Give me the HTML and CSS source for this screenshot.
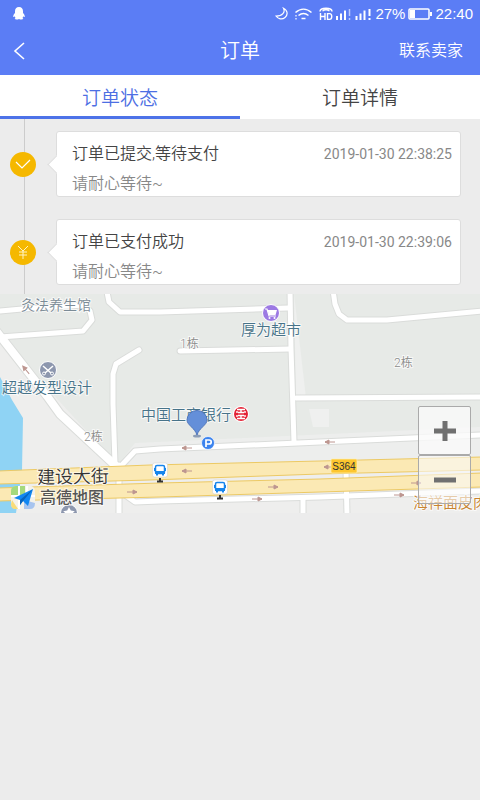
FILE: index.html
```html
<!DOCTYPE html>
<html lang="zh-CN">
<head>
  <meta charset="UTF-8" />
  <meta name="viewport" content="width=device-width, initial-scale=1.0" />
  <title>订单</title>
  <link rel="stylesheet" href="styles.css">
</head>
<body>

<header class="top">
  <div class="status-bar">
    <svg class="qq" width="12" height="13" viewBox="0 0 12 13"><path fill="#fff" d="M6 0C3.300 0 2 1.800 2 4.200V6C1 7 0 8.500 .2 10c.5.2 1-.3 1.400-.8.2.8.6 1.300 1 1.700-.6.3-1 .7-.8 1.200C2.500 12.800 5 12.600 6 12c1 .6 3.500.8 4.200.1.200-.5-.2-.9-.8-1.200.4-.4.8-.9 1-1.700.4.500.9 1 1.400.8C12 8.500 11 7 10 6V4.200C10 1.800 8.700 0 6 0z"/></svg>
    <div class="status-right">
      <svg width="97" height="14" viewBox="0 0 97 14" fill="none" stroke="#fff" stroke-width="1.500">
        <path d="M8.500 1.200c2 4-1 7.800-7.500 7.800 2 3 6 4 9 1.500s3-7-1.500-9.300z" stroke-width="1.200"/>
        <path d="M20.500 5.500c5-4.500 11-4.500 16 0M23.500 8.500c3-2.500 7-2.500 10 0M26.500 11.500h4"/>
        <path d="M21 8v1.500M21 11v1.500" stroke-width="1.200"/>
        <path d="M45 4.500C45 0 57 0 57 4.500M48 4.200c0-2 6-2 6 0" />
        <path d="M45.500 6v7M50 6v7M45.500 9.500H50M52.500 6.600v5.800h2c3 0 3-5.800 0-5.800z" stroke-width="1.400"/>
        <path d="M62 13V9M66 13V6.500M70 13V3.500M81.500 13V9M85.500 13V6.500M89.500 13V3.500" stroke-width="2"/>
        <path d="M74.500 2v7M74.500 11v2" stroke-opacity=".6"/>
        <path d="M94.500 2v7M94.500 11v2" stroke-width="2"/>
      </svg>
      <span>27%</span>
      <svg width="24" height="12" viewBox="0 0 24 12"><rect x="1" y="1" width="20" height="10" rx="1" fill="none" stroke="#fff" stroke-width="1.500"/><path fill="#fff" d="M2 2h5v8H2zM22 4h2v4h-2z"/></svg>
      <span>22:40</span>
    </div>
  </div>
  <div class="nav">
    <button class="back" aria-label="返回"><svg width="12" height="18" viewBox="0 0 12 18"><path d="M11 1L2 9l9 8" fill="none" stroke="#fff" stroke-width="1.600"/></svg></button>
    <h1>订单</h1>
    <a class="contact" href="#">联系卖家</a>
  </div>
</header>

<nav class="tabs">
  <button class="tab active">订单状态</button>
  <button class="tab">订单详情</button>
</nav>

<main>
  <ul class="timeline">
    <li class="step">
      <span class="dot"><svg width="16" height="12" viewBox="0 0 16 12"><path d="M1 4l6 6 8-8" fill="none" stroke="#fff" stroke-width="1.200"/></svg></span>
      <div class="card">
        <div class="card-head">
          <h2>订单已提交,等待支付</h2>
          <time>2019-01-30 22:38:25</time>
        </div>
        <p>请耐心等待~</p>
      </div>
    </li>
    <li class="step">
      <span class="dot"><svg width="12" height="14" viewBox="0 0 12 14"><path d="M1 1l5 5 5-5M6 6v8M2 7h8M2 10h8" fill="none" stroke="#fff3c4"/></svg></span>
      <div class="card">
        <div class="card-head">
          <h2>订单已支付成功</h2>
          <time>2019-01-30 22:39:06</time>
        </div>
        <p>请耐心等待~</p>
      </div>
    </li>
  </ul>

  <section class="map" aria-label="地图">
    <svg class="map-canvas" viewBox="0 294 480 219">
      <defs>
        <path id="arrow" d="M-5 0h10M5 0L1-2v4z" fill="#bd9690" stroke="#bd9690"/>
        <g id="bus">
          <path d="M0 8v4M-3 11.500h6" stroke="#333" stroke-width="2"/>
          <rect x="-7.500" y="-7" width="15" height="14" rx="2" fill="#fff" stroke="#ccc" stroke-width=".5"/>
          <rect x="-4.500" y="-4.500" width="9" height="8" rx="1.500" fill="none" stroke="#1685ec" stroke-width="1.500"/>
          <path d="M-5 1H5v3H-5zM-4 4h2v1.500h-2zM2 4h2v1.500H2zM-6-2h1v3h-1zM5-2h1v3H5z" fill="#1685ec"/>
        </g>
        <g id="roads">
          <path d="M0 311l22-2 62-4 6 6 2 9-9 11-83 6"/>
          <path d="M107 292l2 10 11 10 40 0 128-4"/>
          <path d="M139 350l-23 14-3 10 0 30 2 60"/>
          <path d="M180 351l110-2"/>
          <path d="M290 290l1 58 3 94"/>
          <path d="M296 398l184-1"/>
          <path d="M333 290l2 14 4 10 8 6h40l95-9"/>
          <path d="M120 467l15-16 25-2 160-7 162-7"/>
          <path d="M118 490l17 12 25-1 160-4 162-6"/>
          <path d="M119 465v50M303 499v16"/>
          <path d="M346 470l1 45"/>
        </g>
      </defs>
      <rect y="294" width="480" height="219" fill="#e7eae7"/>
      <path d="M0 337l118 128 362-30v80H0z" fill="#eeeeed"/>
      <path d="M118 465l17-22 345-16v40l-362 8z" fill="#edeeed"/>
      <path d="M294 294l12 104h-10zM309 409h20v18h-16z" fill="#eff0ef"/>
      <path d="M0 377l12 23 11 18-1 52-6 43H0z" fill="#8fd3f4"/>

      <use href="#roads" class="road-edge"/>
      <path class="road-edge wide" d="M-3 332l50 64 13 18 57 53"/>
      <use href="#roads" class="road"/>
      <path class="road wide" d="M-3 332l50 64 13 18 57 53"/>

      <path class="highway" d="M-2 471l152-6 170-4 162-4v13l-162 4-170 6-152 4z"/>
      <path class="highway" d="M-2 488l162-5 160-4 162-6v14l-162 5-160 5-162 4z"/>

      <use href="#arrow" transform="translate(26 370) rotate(230)"/>
      <use href="#arrow" transform="translate(187 448) rotate(180)"/>
      <use href="#arrow" transform="translate(187 471) rotate(180)"/>
      <use href="#arrow" transform="translate(132 492)"/>
      <use href="#arrow" transform="translate(273 487)"/>
      <use href="#arrow" transform="translate(257 499)"/>
      <use href="#arrow" transform="translate(330 442) rotate(180)"/>
      <use href="#arrow" transform="translate(329 467) rotate(180)"/>
      <use href="#arrow" transform="translate(416 483)"/>
      <use href="#arrow" transform="translate(399 495)"/>

      <text class="place grey" x="21" y="310" font-size="14">灸法养生馆</text>
      <text class="place" x="2" y="393" font-size="15">超越发型设计</text>
      <text class="place" x="241" y="335" font-size="15">厚为超市</text>
      <text class="place" x="141" y="420" font-size="15">中国工商银行</text>
      <text class="house" x="180" y="348">1栋</text>
      <text class="house" x="394" y="367">2栋</text>
      <text class="house" x="84" y="441">2栋</text>
      <text class="street" x="37" y="483" transform="rotate(-1 73 476)">建设大街</text>
      <text class="food" x="413" y="508">海祥面皮肉</text>

      <g transform="translate(48 370)">
        <circle r="8.500" fill="#8d97ae" stroke="#fff"/>
        <path d="M-5-4L3 3M5-4L-3 3" stroke="#fff" stroke-width="1.500"/>
        <circle cx="-4" cy="3.500" r="1.500" fill="none" stroke="#fff"/>
        <circle cx="4" cy="3.500" r="1.500" fill="none" stroke="#fff"/>
      </g>
      <g transform="translate(271 313)">
        <circle r="8.500" fill="#9c79e3" stroke="#fff"/>
        <path d="M-6-4h2l2 7H5" fill="none" stroke="#fff" stroke-width="1.200"/>
        <path d="M-3.500-3H6L4.500 2H-2z" fill="#fff"/>
        <circle cx="-1.500" cy="5" r="1" fill="#fff"/><circle cx="3.500" cy="5" r="1" fill="#fff"/>
      </g>
      <g transform="translate(241 414)">
        <circle r="8" fill="#fff"/><circle r="7" fill="#e32235"/>
        <path d="M-4-4.500h8M-3-1.500H3M-3 1.500H3M-4 4.500h8M0-4.500v3M0 1.500v3M-4-3v2M4-3v2M-4 1v2M4 1v2" stroke="#fff" stroke-width="1.400"/>
      </g>
      <g transform="translate(208 443)">
        <circle r="6.500" fill="#3b83ee" stroke="#fff" stroke-width=".7"/>
        <path d="M-2 4v-7h3c3 0 3 4 0 4h-3" fill="none" stroke="#fff" stroke-width="1.700"/>
      </g>
      <ellipse cx="197" cy="436" rx="4" ry="1.500" fill="#8c9db6"/>
      <path d="M197 435c-2-7-10-10-10-15a10 9.500 0 0 1 20 0c0 5-8 8-10 15z" fill="#648fd9" stroke="#5077bb"/>
      <use href="#bus" transform="translate(160 470)"/>
      <use href="#bus" transform="translate(220 487)"/>

      <rect x="331" y="459" width="26" height="14" rx="1" fill="#fdc62f" stroke="#fff0b5" stroke-width=".7"/>
      <text class="route" x="344" y="470">S364</text>

      <g transform="translate(69 513)">
        <circle r="8.500" fill="#8d97ae" stroke="#fff"/>
        <path d="M0-6l1.800 3.600 4 .6-3 2.800L3.500 5h-7l.7-4-3-2.800 4-.6z" fill="#fff"/>
      </g>
      <rect x="11" y="486" width="24" height="23" rx="5" fill="#f4f2ea"/>
      <path d="M16 486h9v9H11v-4q0-5 5-5z" fill="#a5d97e"/>
      <path d="M19 486v23M27 486v23M11 496h24" stroke="#fff" stroke-width="2"/>
      <path d="M12 500l6 9h-3q-4 0-4-5z" fill="#f8dc79"/>
      <path d="M24 500l11 3q0 6-5 6h-6z" fill="#a7c4ef"/>
      <path d="M14 498l19-9-5 17-5-5-3 4v-5z" fill="#1187f1"/>
      <path d="M33 489l-13 11v5l3-4z" fill="#0864bc"/>
      <text class="brand" x="40" y="503">高德地图</text>
    </svg>
    <div class="zoom">
      <button aria-label="放大"><svg width="22" height="22" viewBox="0 0 22 22"><path d="M0 11h22M11 1v20" stroke="#707070" stroke-width="5"/></svg></button>
      <button aria-label="缩小"><svg width="22" height="22" viewBox="0 0 22 22"><path d="M0 11h22" stroke="#707070" stroke-width="5"/></svg></button>
    </div>
  </section>
</main>

</body>
</html>
```
FILE: styles.css
```css
* {
  box-sizing: border-box;
}

body {
  margin: 0;
  background: #ececec;
  color: #444;
  font-family: Roboto, "Noto Sans CJK SC", sans-serif;
  font-weight: 350;
}

h1, h2, p, ul {
  margin: 0;
  padding: 0;
  font-weight: inherit;
}

button {
  border: none;
  padding: 0;
  background: none;
  font: inherit;
  cursor: pointer;
}

svg {
  display: block;
}

.top {
  background: #5b7df5;
  color: #fff;
}

.status-bar {
  display: flex;
  justify-content: space-between;
  align-items: center;
  height: 27px;
  padding: 0 7px 0 13px;
  font-family: "Liberation Sans", sans-serif;
  font-size: 15px;
}

.status-right {
  display: flex;
  align-items: center;
  gap: 3px;
}

.nav {
  display: grid;
  grid-template-columns: 1fr auto 1fr;
  align-items: center;
  height: 48px;
  padding: 0 17px 0 13px;
}

.nav h1 {
  padding-left: 4px;
  font-size: 20px;
  line-height: 26px;
}

.contact {
  justify-self: end;
  color: #fff;
  font-size: 16px;
  line-height: 26px;
  text-decoration: none;
}

.tabs {
  display: flex;
  background: #fff;
}

.tab {
  flex: 1;
  height: 44px;
  border-bottom: 3px solid transparent;
  padding-top: 2px;
  color: #444;
  font-size: 19px;
}

.tab.active {
  border-color: #4d72e8;
  color: #4d6fe3;
}

/* timeline */
.timeline {
  display: flex;
  flex-direction: column;
  gap: 22px;
  padding: 12px 19px 9px 10px;
  list-style: none;
  background: linear-gradient(#ccc, #ccc) 24px 0 / 1px 100% no-repeat;
}

.step {
  display: flex;
  align-items: center;
  gap: 20px;
}

.dot {
  display: flex;
  align-items: center;
  justify-content: center;
  width: 26px;
  height: 25px;
  border-radius: 50%;
  background: #f5b800;
}

.card {
  position: relative;
  flex: 1;
  border: 1px solid #ddd;
  border-radius: 3px;
  padding: 10px 8px 0 15px;
  background: #fff;
}

.card::before {
  content: "";
  position: absolute;
  left: -7px;
  top: 26px;
  width: 12px;
  height: 12px;
  border-left: 1px solid #ddd;
  border-bottom: 1px solid #ddd;
  background: #fff;
  transform: rotate(45deg);
}

.card-head {
  display: flex;
  justify-content: space-between;
  align-items: center;
}

.card h2,
.card p {
  font-size: 16px;
  line-height: 24px;
}

.card p {
  padding-top: 6px;
  color: #888;
}

.card time {
  color: #888;
  font-size: 14px;
  font-weight: 400;
}

/* map */
.map {
  position: relative;
}

.map-canvas {
  width: 100%;
  height: auto;
}

.road,
.road-edge {
  fill: none;
  stroke: #fff;
  stroke-width: 5px;
  stroke-linejoin: round;
  stroke-linecap: round;
}

.road-edge {
  stroke: #dadcda;
  stroke-width: 7px;
}

.road.wide {
  stroke-width: 8px;
}

.road-edge.wide {
  stroke-width: 10px;
}

.highway {
  fill: #fbe9b4;
  stroke: #ecc964;
}

.place,
.house,
.street,
.food,
.brand {
  paint-order: stroke;
  stroke: #fff;
  stroke-width: 2px;
  stroke-opacity: 0.7;
}

.place {
  fill: #477389;
}

.place.grey {
  fill: #7b8b96;
}

.house {
  fill: #8b8b8b;
  font-size: 12px;
}

.street {
  fill: #333;
  font-size: 18px;
}

.food {
  fill: #c88430;
  font-size: 15px;
}

.brand {
  fill: #555;
  font-size: 16px;
  font-weight: 500;
}

.route {
  fill: #333;
  font-family: "Liberation Sans", sans-serif;
  font-size: 10px;
  text-anchor: middle;
}

.zoom {
  position: absolute;
  right: 9px;
  bottom: 9px;
  display: flex;
  flex-direction: column;
}

.zoom button {
  display: flex;
  align-items: center;
  justify-content: center;
  width: 53px;
  height: 49px;
  border: 1px solid #aaa;
  border-radius: 2px;
  background: rgba(250, 250, 250, 0.8);
}

.zoom button + button {
  background: rgba(250, 250, 250, 0.6);
}
```
